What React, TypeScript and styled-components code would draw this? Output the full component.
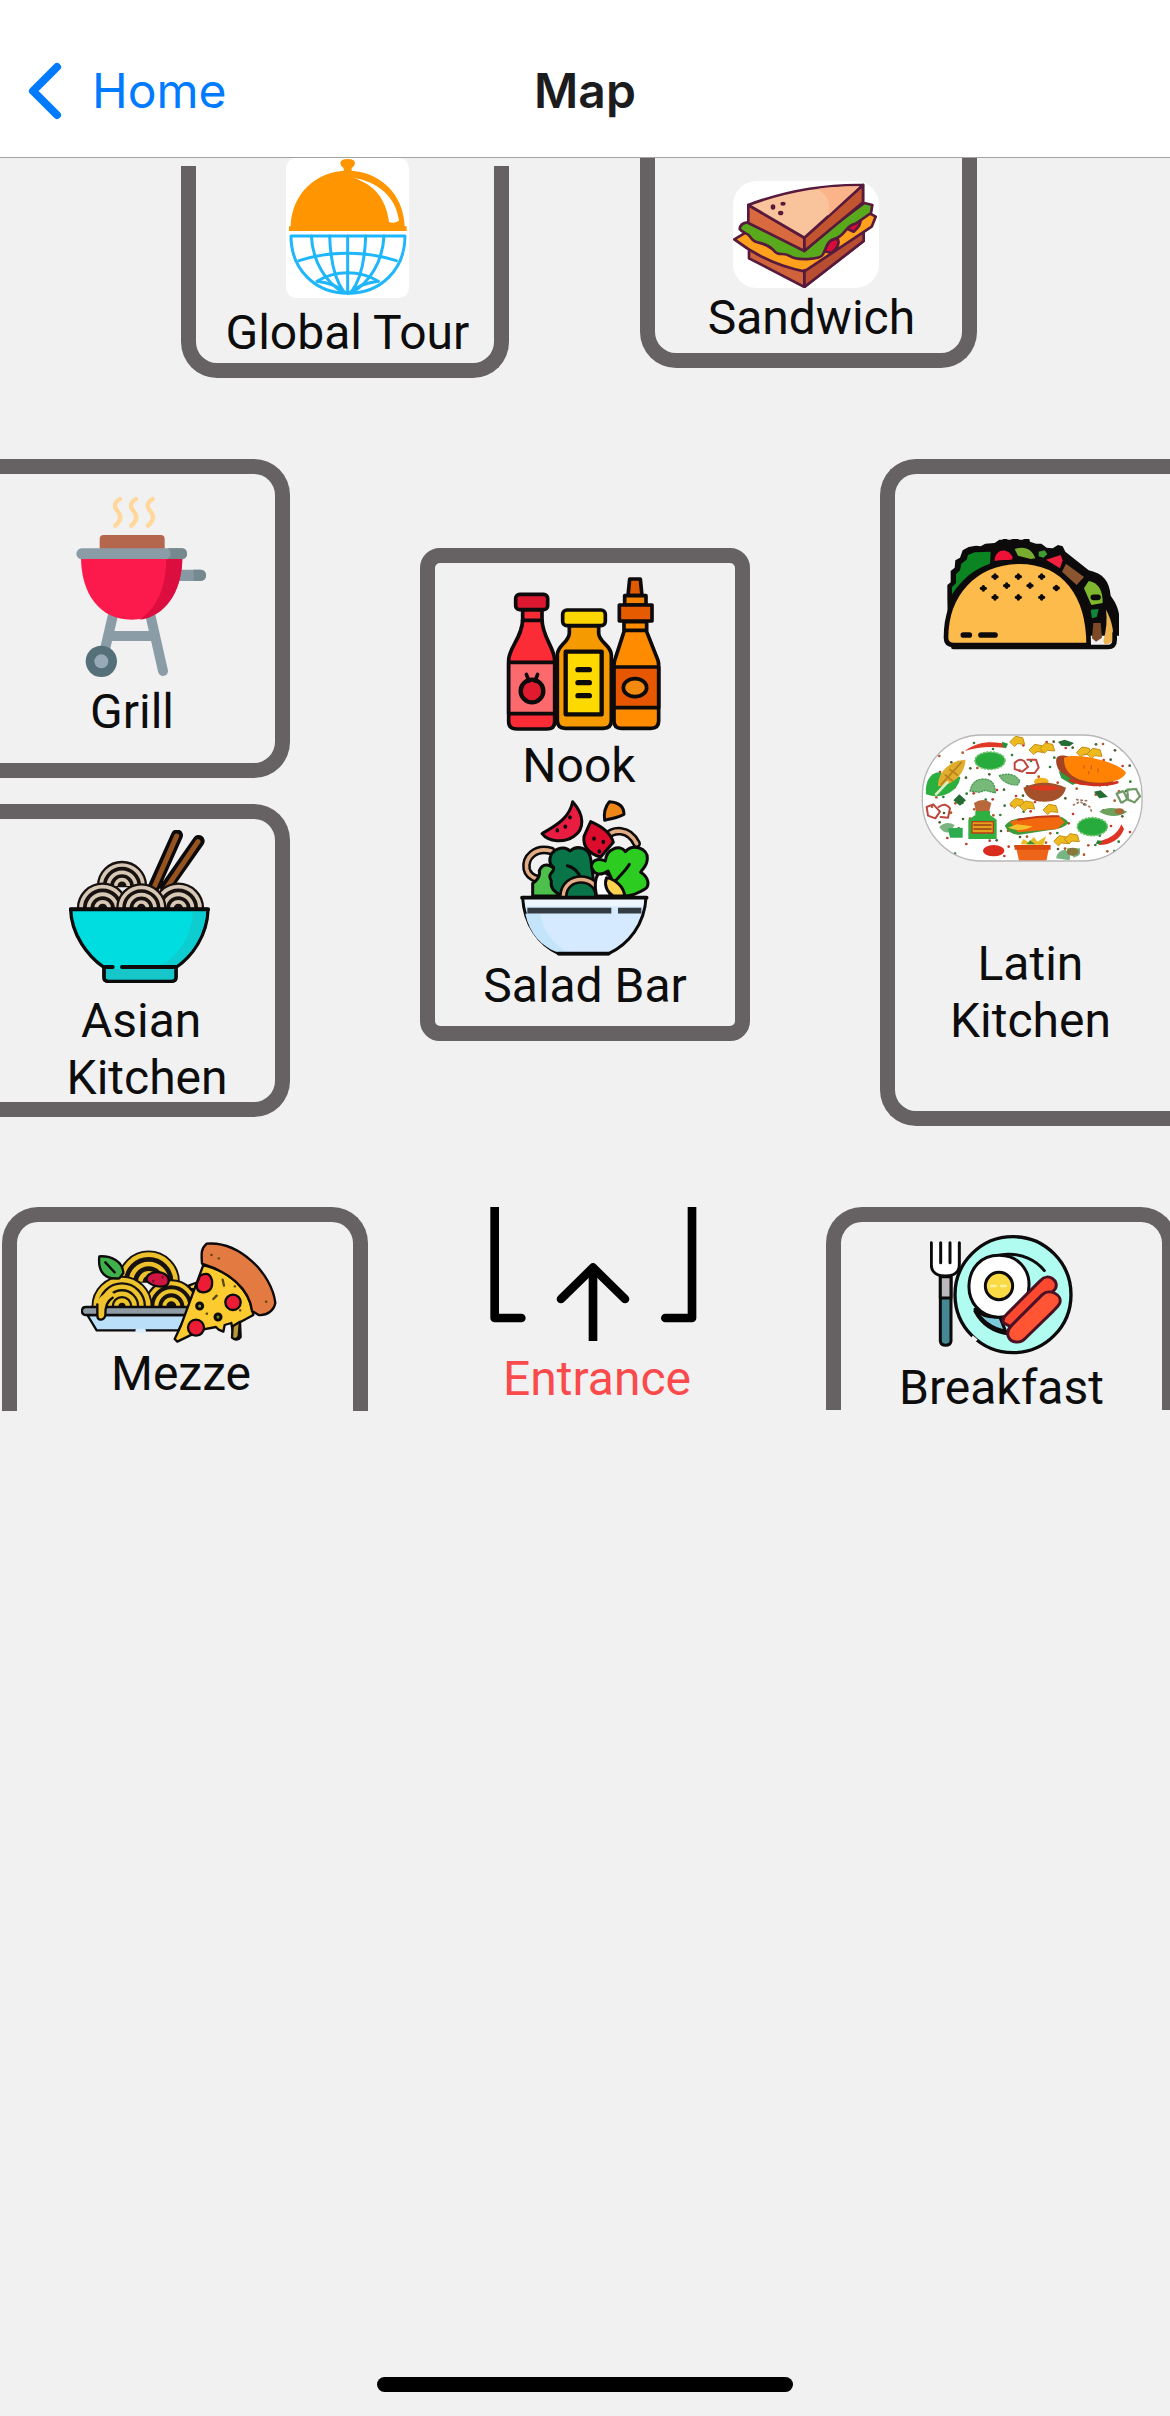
import React from "react";
import styled, { createGlobalStyle } from "styled-components";

const wall = "#666263";
const ink = "#0c0a0b";

const GlobalStyle = createGlobalStyle`
  * { box-sizing: border-box; }
  body { margin: 0; background: #f1f1f1; }
`;

const Screen = styled.div`
  display: flex;
  flex-direction: column;
  min-height: 100vh;
  overflow: hidden;
  background: #f1f1f1;
  font-family: Roboto, "Liberation Sans", sans-serif;
`;

const Header = styled.header`
  display: grid;
  grid-template-columns: 1fr auto 1fr;
  align-items: center;
  padding: 49px 28px 24px;
  background: #ffffff;
  border-bottom: 1px solid #a3a3a5;
  font-family: Inter, Roboto, sans-serif;
`;

const BackButton = styled.button`
  display: flex;
  align-items: center;
  justify-self: start;
  gap: 30px;
  padding: 0;
  border: 0;
  background: none;
  color: #007aff;
  font: inherit;
  font-size: 48px;
  line-height: 84px;
  cursor: pointer;
`;

const Title = styled.h1`
  margin: 0;
  color: #1c1c1e;
  font-size: 48px;
  font-weight: 600;
  line-height: 84px;
`;

const FloorPlan = styled.main`
  display: flex;
  flex-direction: column;
  gap: 81px;
`;

const TopRow = styled.section`
  display: grid;
  grid-template-columns: 328fr 337fr;
  column-gap: 16.4%;
  align-items: start;
  padding: 0 16.5% 0 15.5%;
`;

const MiddleRow = styled.section`
  display: grid;
  grid-template-columns: 290fr 330fr 290fr;
  column-gap: 11.1%;
  align-items: start;
`;

const Column = styled.div<{ $top?: number }>`
  display: flex;
  flex-direction: column;
  gap: 26px;
  padding-top: ${(p) => p.$top ?? 0}px;
`;

const BottomRow = styled.section`
  display: grid;
  grid-template-columns: 366fr 458fr 351fr;
  align-items: start;
  margin: 0 -7px 0 2px;
`;

type Side = "top" | "right" | "bottom" | "left";

const Room = styled.div<{ $open?: Side; $pad: string; $gap?: number; $radius?: number }>`
  display: flex;
  flex-direction: column;
  align-items: center;
  gap: ${(p) => p.$gap ?? 0}px;
  padding: ${(p) => p.$pad};
  border: 15px solid ${wall};
  border-radius: ${(p) => p.$radius ?? 36}px;
  ${(p) => p.$open && `border-${p.$open}: 0;`}
  ${(p) => p.$open === "top" && "border-top-left-radius: 0; border-top-right-radius: 0;"}
  ${(p) => p.$open === "bottom" && "border-bottom-left-radius: 0; border-bottom-right-radius: 0;"}
  ${(p) => p.$open === "left" && "border-top-left-radius: 0; border-bottom-left-radius: 0;"}
  ${(p) => p.$open === "right" && "border-top-right-radius: 0; border-bottom-right-radius: 0;"}
`;

const RaisedRoom = styled(Room)`
  margin-top: 8px;

  svg { margin-top: -8px; }
`;

const Station = styled.figure<{ $gap: number }>`
  display: flex;
  flex-direction: column;
  align-items: center;
  gap: ${(p) => p.$gap}px;
  margin: 0;
`;

const Label = styled.figcaption<{ $accent?: boolean }>`
  margin-bottom: -6px;
  color: ${(p) => (p.$accent ? "#fb4a4c" : "#0d0d0d")};
  font-size: 48px;
  line-height: 57px;
  text-align: center;
  white-space: pre;
`;

const Drawing = styled.svg`
  display: block;
  flex: none;
`;

const Footer = styled.footer`
  display: flex;
  justify-content: center;
  margin-top: auto;
  padding-bottom: 24px;
`;

const HomeIndicator = styled.div`
  width: 35.6%;
  height: 15px;
  border-radius: 8px;
  background: #000000;
`;

/* Every drawing uses three units per pixel. */
function Art({ box, children }: { box: [number, number, number, number]; children: React.ReactNode }) {
  const [x, y, w, h] = box;
  return (
    <Drawing
      width={w / 3}
      height={h / 3}
      viewBox={`${x} ${y} ${w} ${h}`}
      fill="none"
      strokeLinecap="round"
      strokeLinejoin="round"
      aria-hidden="true"
    >
      {children}
    </Drawing>
  );
}

const GlobeArt = () => (
  <Art box={[345, 24, 369, 420]}>
    <rect x="345" y="24" width="369" height="420" rx="30" fill="#fff" />
    <path d="M508 40q0-13 22-13t22 13q0 8-10 14v12h-24V54q-10-6-10-14Z" fill="#ff9500" />
    <path d="M354 243v-14h5C362 130 436 62 530 62s168 68 171 167h6v14Z" fill="#ff9500" />
    <path d="M548 84c72 10 128 58 136 128q-14 10-30 4c-8-66-42-112-106-132Z" fill="#fff" />
    <g stroke="#1fb6fb" strokeWidth="9">
      <path d="M360 258h342c0 100-72 172-171 172S360 358 360 258Z" />
      <path d="M530 258v172M476 258c2 70 14 130 44 170M584 258c-2 70-14 130-44 170M421 258c4 78 44 140 96 170M639 258c-4 78-44 140-96 170" />
      <path d="M384 332c90-30 200-30 292 0M438 394c56-34 128-34 184 0M438 394c34 4 62 14 86 34M622 394c-34 4-62 14-86 34" />
    </g>
  </Art>
);

const SandwichArt = () => (
  <Art box={[308, 92, 471, 321]}>
    <rect x="308" y="92" width="438" height="321" rx="72" fill="#fff" />
    <g stroke="#571a3c" strokeWidth="8">
      <path d="M356 262v62l166 86 178-138v-60L520 340Z" fill="#d0633c" />
      <path d="M522 352l178-142v62L522 410Z" fill="#b84e31" />
      <path d="M312 267l40-24 170 66 196-120 18 10-12 30-202 134q-110-20-210-96Z" fill="#ffa11c" />
      <path d="M578 302q4-32 44-38 10 20-18 44ZM652 236q6-24 38-30 4 18-20 38Z" fill="#d90b3a" />
      <path d="M328 236q2-18 24-20l170 76 180-134 24 6-4 24-46 32c-34 6-30 40-66 46-18 4-22 26-32 46-8 18-84 18-98 6-22-16-34 4-52-20-28-28-56-14-68-38-10-14-24-12-32-24Z" fill="#58a91c" />
      <path d="M354 164v54l168 84 176-150v-48L520 262Z" fill="#d96a3f" />
      <path d="M522 262l176-158v52L522 302Z" fill="#c2552f" />
      <path d="M354 164c100-38 206-62 344-60L522 262Z" fill="#f9c39c" />
    </g>
    <path d="M560 116q44-8 126-8l-94 88c8-28 8-60-32-80Z" fill="#fbb48a" />
    <path d="M522 268v30M522 358v46" stroke="#571a3c" strokeWidth="6" />
    <g fill="#571a3c">
      <ellipse cx="428" cy="170" rx="7" ry="8" />
      <ellipse cx="458" cy="160" rx="8" ry="6" />
      <ellipse cx="451" cy="188" rx="8" ry="7" />
    </g>
  </Art>
);

const GrillArt = () => (
  <Art box={[172, 165, 448, 543]}>
    <g stroke="#ffd79b" strokeWidth="13">
      <path d="M361 174c-20 12-18 24-6 38 10 12 10 26-8 42" />
      <path d="M409 174c-20 12-18 24-6 38 10 12 10 26-8 42" />
      <path d="M459 174c-20 12-18 24-6 38 10 12 10 26-8 42" />
    </g>
    <path d="M300 328v-34q0-12 12-12h171q12 0 12 12v34Z" fill="#b4674c" />
    <g stroke="#8a9ca6" strokeWidth="30">
      <path d="M340 522l-22 94M452 522l38 168M330 585h132" />
      <path d="M540 403h62" stroke="#8799a2" strokeWidth="34" />
    </g>
    <path d="M582 386h20q17 0 17 17t-17 17h-20Z" fill="#75898f" />
    <path d="M244 348h304c0 108-54 188-152 188S244 456 244 348Z" fill="#fb1a4b" />
    <path d="M500 348h48c0 104-52 180-128 188 60-40 80-110 80-188Z" fill="#db0e3f" />
    <rect x="230" y="322" width="332" height="32" rx="16" fill="#8a9ca6" />
    <path d="M505 322h41q16 0 16 16t-16 16h-41q16-16 0-32Z" fill="#75898f" />
    <circle cx="305" cy="661" r="47" fill="#56707a" />
    <circle cx="305" cy="661" r="21" fill="#98aab7" />
  </Art>
);

const Swirl = ({ x, y, r, color, rings = 3 }: { x: number; y: number; r: number; color: string; rings?: number }) => (
  <g>
    <path d={`M${x - r} ${y}a${r} ${r} 0 0 1 ${2 * r} 0Z`} fill="#17120f" stroke="#17120f" strokeWidth="7" />
    {Array.from({ length: rings }, (_, i) => {
      const s = r - 9 - (i * (r - 6)) / rings;
      return s > 0 ? (
        <path key={i} d={`M${x - s} ${y}a${s} ${s} 0 0 1 ${2 * s} 0`} stroke={color} strokeWidth={r / 6.5} strokeLinecap="butt" />
      ) : null;
    })}
  </g>
);

const NoodlesArt = () => (
  <Art box={[207, 117, 468, 459]}>
    <g stroke={ink} strokeWidth="36">
      <path d="M531 133l-68 152M596 150l-98 140" />
    </g>
    <path d="M530 135l-66 150M594 152l-94 138" stroke="#95531f" strokeWidth="15" />
    <Swirl x={366} y={285} r={72} color="#d7c7b5" />
    <Swirl x={535} y={352} r={74} color="#d7c7b5" />
    <Swirl x={308} y={352} r={74} color="#d7c7b5" />
    <Swirl x={424} y={352} r={72} color="#d7c7b5" />
    <g stroke={ink} strokeWidth="10">
      <path d="M212 355h412c-2 76-46 140-96 174v30q0 12-14 12H324q-12 0-12-12v-30c-50-34-98-100-100-174Z" fill="#00dde0" />
      <path d="M578 362h40c-4 70-44 130-92 162h-46c62-34 94-90 98-162Z" fill="#0ecdd0" stroke="none" />
      <path d="M318 534h206v32H324q-6-4-6-12Z" fill="#16c6c9" stroke="none" />
      <path d="M212 355h412M316 528h22M366 528h160" strokeWidth="12" />
      <path d="M312 529v30q0 12 12 12h190q14 0 14-12v-30" />
    </g>
  </Art>
);

const BottlesArt = () => (
  <Art box={[288, 105, 474, 465]}>
    <g stroke={ink} strokeWidth="11">
      <path d="M338 206h58v28c0 54 38 86 38 124v184q0 22-24 22h-88q-26 0-26-22V358c0-38 42-70 42-124Z" fill="#fb2c36" />
      <rect x="296" y="364" width="138" height="154" fill="#fd6a6d" />
      <rect x="317" y="160" width="96" height="46" rx="12" fill="#dc1730" />
      <path d="M338 238h58" />
      <circle cx="366" cy="450" r="34" fill="#e01b30" strokeWidth="13" />
      <path d="M349 400l8 20M383 400l-8 20" />
      <path d="M478 254h88v22c0 28 38 36 38 66v196q0 24-24 24H466q-24 0-24-24V342c0-30 36-38 36-66Z" fill="#f59a00" />
      <rect x="458" y="207" width="128" height="47" rx="13" fill="#fdd600" />
      <rect x="467" y="332" width="108" height="188" fill="#fdd900" strokeWidth="13" />
      <path d="M504 386h34M504 425h34M504 464h34" strokeWidth="16" />
      <path d="M642 242h68v30l34 86q2 6 2 18v164q0 22-24 22h-88q-22 0-22-22V376q0-12 2-18l28-86Z" fill="#fe8b00" />
      <path d="M612 378h134v122H612Z" fill="#e65700" />
      <path d="M654 164l5-50h32l5 50Z" fill="#e05a00" />
      <path d="M644 192v-28h64v28Z" fill="#f28200" />
      <path d="M628 192h98v48h-98Z" fill="#e65b00" />
      <path d="M644 268h64" />
      <ellipse cx="675" cy="440" rx="35" ry="27" fill="#f28a10" />
    </g>
  </Art>
);

const SaladArt = () => (
  <Art box={[312, 54, 424, 470]}>
    <g strokeWidth="26" stroke={ink}>
      <path d="M424 210c-48-14-80 20-74 54 4 20 18 26 32 30" />
      <path d="M590 166c18-20 66-28 90 22" />
      <path d="M424 210c-48-14-80 20-74 54 4 20 18 26 32 30M590 166c18-20 66-28 90 22" stroke="#e2ad84" strokeWidth="11" />
    </g>
    <g stroke={ink} strokeWidth="9">
      <path d="M368 345v-38c12-6 24-24 20-38 10-26 34-20 50 0l6 76Z" fill="#4cc04a" />
      <path d="M424 220c12-20 42-26 56-10 22-20 58-8 62 22l14 110H450c-16-10-30-20-26-42-16-24 14-26 6-42-14-8-12-26-6-38Z" fill="#087448" />
      <path d="M472 254c22 4 34 20 44 42M484 346v-20" />
      <path d="M460 345c2-66 104-66 106 0" fill="#087448" strokeWidth="26" />
      <path d="M460 345c2-66 104-66 106 0" stroke="#e2ad84" strokeWidth="10" />
      <path d="M560 345c-10-44 0-66 14-78l26 18v60Z" fill="#fff" />
      <path d="M544 256c4-26 28-22 42-16 2-36 44-52 60-28 22-26 68-10 66 20 0 26-14 28-20 42 24 14 30 42 10 52-16 8-24 16-48 18h-26l-34-74c-26 18-44 8-50-14Z" fill="#2dcc20" />
      <path d="M658 250c-12 22-32 36-48 58" />
      <path d="M590 290c32 8 52 30 54 55h-34c-22-14-28-36-20-55Z" fill="#fcd350" />
      <path d="M396 158c36-22 82-44 92-96 36 40 36 82 4 104-28 20-76 18-96-8Z" fill="#e91d42" />
      <path d="M542 122c38 16 60 34 68 62l-38 44c-34-10-54-28-50-62Z" fill="#dc0c2d" />
      <path d="M584 118c-4-28 4-44 14-56 30 2 44 16 44 38-18 12-38 12-58 18Z" fill="#ee8718" />
      <path d="M442 147v2M466 136v2M480 108v2M552 172v2M568 210v2M580 182v2" strokeWidth="11" />
      <path d="M338 350h370c-4 80-52 140-112 168H446c-60-28-104-88-108-168Z" fill="#d5eaff" />
      <path d="M344 352h358q0 14-3 24H347q-3-10-3-24Z" fill="#edf6ff" stroke="none" />
      <path d="M346 398c12 60 50 98 92 114h30c-40-28-70-64-78-114Z" fill="#c3e4fb" stroke="none" />
      <path d="M352 389h252M624 389h70" stroke="#333c43" strokeWidth="17" strokeLinecap="butt" />
      <path d="M336 350h374M446 518h150" strokeWidth="11" />
    </g>
  </Art>
);

const tacoSeeds: [number, number][] = [
  [381, 377], [451, 377], [521, 377], [346, 412], [416, 404], [486, 404], [565, 411], [381, 439], [451, 439], [521, 439],
];

const TacoArt = () => (
  <Art box={[222, 264, 531, 366]}>
    <path d="M238 440v-38l10-8v-34l12-10 2-22 14-8 8-22 18-10 22-4 14 2 14-8 28-2 14-10h10v-8h14v8h12l4-10h18v10h14v-10h16l4 16 18 6h16l16 12 18 2 16-10 14 4 8 16 70 56c44 10 62 32 66 76 26 36 28 56 28 112v8H240Z" fill={ink} />
    <path d="M252 430v-22l12-12v-26l12-12 4-20 16-12 4-14 20-8 48-2-2 36c-48 16-84 46-114 92Z" fill="#0b8422" />
    <path d="M380 326c4-34 40-36 54-8l-2 10c-20-2-36-2-52 2Z" fill="#ee1138" />
    <path d="M440 294c30-10 52 0 62 28l-14 2-38-10Z" fill="#78ad2f" />
    <path d="M512 302l18-4 8 12-12 10-14-4Z" fill="#3f9c30" />
    <path d="M534 326l44-14 6 16-8 24Z" fill="#f2203f" />
    <path d="M594 338l54 40-22 24-44-40Z" fill="#8b5530" />
    <path d="M662 390c32 6 42 30 42 66l-34 6-22-50Z" fill="#7fb82f" />
    <path d="M668 476l24-2-6 24-14 4Z" fill="#0f8738" />
    <path d="M676 516h22l4 44-18 12-12-10Z" fill="#7d4a27" />
    <path d="M714 476c14 24 24 60 22 86-2 14-14 18-26 18l-4-10q14-50 8-94Z" fill="#efb452" />
    <path d="M234 560c0-128 84-226 220-228 136 0 208 102 208 250H258q-24 0-24-22Z" fill="#fdbb4c" stroke={ink} strokeWidth="14" />
    <path d="M256 588h464q20 0 20-22v-20" stroke={ink} strokeWidth="14" />
    <path d="M286 552h18M339 552h42M676 439h14" stroke={ink} strokeWidth="17" />
    {tacoSeeds.map(([x, y]) => (
      <path key={`${x}-${y}`} d={`M${x - 6} ${y}h12M${x} ${y - 5}v10`} stroke={ink} strokeWidth="10" />
    ))}
  </Art>
);

const crumbs: [number, number, string][] = Array.from({ length: 150 }, (_, i) => [
  185 + ((i * 137) % 605),
  868 + ((i * 83) % 350),
  ["#2e7d3a", "#b4552a", "#4b5b33", "#c0392b"][i % 4],
]);

const chips: [number, number][] = [[440, 868], [498, 892], [530, 888], [640, 900], [672, 904], [440, 1054], [470, 1062], [540, 1072], [572, 1166], [604, 1160]];

const FiestaArt = () => (
  <Art box={[144, 849, 675, 384]}>
    <defs>
      <clipPath id="platter">
        <rect x="157" y="852" width="659" height="378" rx="180" />
      </clipPath>
    </defs>
    <rect x="157" y="852" width="659" height="378" rx="180" fill="#fff" />
    <g clipPath="url(#platter)">
      {crumbs.map(([x, y, c]) => (
        <circle key={`${x}-${y}`} cx={x} cy={y} r="4" fill={c} />
      ))}
      <path d="M284 900c34-26 72-30 108-24l20 4-8 10c-40-4-80-4-120 10Z" fill="#e03a26" />
      <path d="M396 872l18 6-6 14-10-4Z" fill="#2a8f3c" />
      <ellipse cx="360" cy="929" rx="45" ry="26" fill="#27ab3c" stroke="#6cc06a" strokeWidth="5" strokeDasharray="3 7" />
      <ellipse cx="667" cy="1127" rx="45" ry="27" fill="#27ab3c" stroke="#6cc06a" strokeWidth="5" strokeDasharray="3 7" />
      <path d="M168 1030c-4-40 14-62 36-66l66 14c0 34-46 72-102 52Z" fill="#2bb03f" />
      <path d="M204 1006c-2-42 36-78 82-80 0 38-32 76-82 80Z" fill="#e0ad2c" />
      <path d="M214 1000l60-66M226 972l22 18M240 956l22 16" stroke="#b8821c" strokeWidth="5" />
      <path d="M232 994l-34 36" stroke="#ddeec6" strokeWidth="8" />
      {chips.map(([x, y]) => (
        <path key={`${x}-${y}`} d={`M${x - 20} ${y + 4}l16-16 22 4 6 20-22-2-8 8Z`} fill="#ecb91e" stroke="#c48d18" strokeWidth="3" />
      ))}
      <path d="M564 872l20-6 28 10-14 10-24-2ZM672 1022l20-4 22 20-26 4ZM250 1048l18-18 20 18-18 16Z" fill="#256d34" />
      <path d="M434 936q14-16 28-6l12 18-18 14-22-8ZM472 926h26l8 24-12 16h-24M170 1068l20-8 20 22-14 20-22-8ZM206 1068q20-16 34 4l-6 28-22-2" stroke="#bd473f" strokeWidth="6" />
      <path d="M740 1028l20-8 12 24-18 12ZM772 1016l26-2 12 22-16 18-20-8Z" stroke="#6f9a66" strokeWidth="7" strokeDasharray="7 5" />
      <path d="M560 920c10-10 24-6 34-4l150 50-20 36-98-2-46-28c-14-10-26-34-20-52Z" fill="#a34324" />
      <path d="M566 960l20 12 34 24-12 6-34-20Z" fill="#2f9a3c" />
      <path d="M582 920c40-18 172 16 186 46-12 26-62 34-114 26-46-8-74-30-72-72Z" fill="#ff8205" />
      <path d="M600 988c40 16 104 18 142 6" stroke="#d12f1e" strokeWidth="8" />
      <path d="M642 944v8M664 944v10M684 954v8M656 962v6" stroke="#d0640c" strokeWidth="4" />
      <path d="M300 1020q8-36 40-36 36 0 36 42l-30-8-18 6ZM388 974q40-14 62 16l-8 12q-38 0-54-28Z" fill="#78b97a" stroke="#4c9a58" strokeWidth="4" strokeDasharray="4 5" />
      <ellipse cx="514" cy="992" rx="22" ry="12" fill="#f2b31d" />
      <path d="M460 1010q64-30 128 0-10 42-66 42-52 0-62-42Z" fill="#a4502a" />
      <path d="M474 1010q50-16 100 2-50 16-100-2Z" fill="#e2381f" />
      <path d="M312 1056q26-18 52 0l-6 24h-40Z" fill="#b8683a" />
      <path d="M316 1080h44v12l20 14v58H295v-58l21-14Z" fill="#2fb040" />
      <path d="M306 1112h64v34h-64Z" fill="#e2a21b" stroke="#bb3b1a" strokeWidth="4" />
      <path d="M312 1122h52M312 1134h52" stroke="#9c3919" strokeWidth="5" strokeDasharray="6 3" />
      <path d="M404 1124q18-20 46-22l92-8q38-2 54 22-20 20-60 22l-78 12q-38 6-54-26Z" fill="#3c9a39" />
      <path d="M420 1112q80-20 150-14l14 16-22 20-118 10Z" fill="#f2680e" />
      <path d="M414 1130q40 16 74-4l-48-6Z" fill="#f5c22c" />
      <path d="M444 1106q70-12 122-10" stroke="#c2361c" strokeWidth="6" />
      <path d="M438 1188h100l-10 46h-80Z" fill="#ee6418" />
      <path d="M434 1182h108v14H434Z" fill="#d9480e" />
      <path d="M452 1180l8-16 16 10 16-16 10 14 26-16-8 26Z" fill="#e8bd22" />
      <path d="M470 1180l10-12 16 12Z" fill="#3b9439" />
      <ellipse cx="371" cy="1199" rx="32" ry="17" fill="#d92b1e" />
      <path d="M678 1174c38-10 64-22 76-54l8 14c-10 30-40 48-74 48Z" fill="#dd3423" />
      <path d="M682 1168l16 2-8 10-12-2Z" fill="#25863a" />
      <path d="M688 1082q30-22 84 0-40 26-84 0Z" fill="#6ca25c" />
      <ellipse cx="748" cy="1081" rx="14" ry="9" fill="#a86734" />
      <path d="M610 1062l20-10 30 16 4 12M620 1046l36 4" stroke="#a07465" strokeWidth="5" strokeDasharray="4 9" />
      <path d="M208 1128q20-20 46-6l-14 22q-20 4-32-16Z" fill="#7bb382" />
      <path d="M234 1132l44-2v30h-38Z" fill="#2cab50" />
      <path d="M558 1222q4-24 28-26 20 14 12 32ZM588 1192h42v18l-18 10Z" fill="#78b585" />
      <ellipse cx="608" cy="1202" rx="18" ry="12" fill="#87783c" />
    </g>
    <rect x="157" y="852" width="659" height="378" rx="180" stroke="#b9b7b8" strokeWidth="4" />
  </Art>
);

const MezzeArt = () => (
  <Art box={[243, 156, 600, 309]}>
    <Swirl x={446} y={278} r={90} color="#ecc12b" rings={3} />
    <Swirl x={514} y={352} r={78} color="#eec42d" rings={3} />
    <Swirl x={366} y={352} r={88} color="#eec42d" rings={4} />
    <g stroke={ink} strokeWidth="7">
      <path d="M566 290l20-8 18 6-6 16-26-4Z" fill="#ead061" />
      <path d="M298 202c36-2 70 14 72 50l-12 16c-38 4-66-14-60-66Z" fill="#40b04a" />
      <path d="M316 220l28 30" />
      <path d="M440 276c-6-34 64-36 66-2 2 26-42 24-66 2Z" fill="#cf1541" />
      <path d="M460 276v1M488 264v1" stroke="#7c0a2a" />
      <path d="M262 378h296l-22 46H290Z" fill="#b9dff9" />
      <path d="M258 354h310l-12 24H258q-12 0-12-12t12-12Z" fill="#8f9ca5" />
      <path d="M412 425h20" stroke="#d8edfb" strokeWidth="12" />
      <path d="M292 352q-4-30 40-46l18 14q-36 10-34 62 0 14-14 10-10-2-10-12Z" fill="#efc22e" stroke="none" />
      <path d="M292 346v32q0 14 10 14t14-12q-2-40 22-54" />
      <path d="M610 228c80 20 140 74 150 150l-40 22 2 44q-8 12-20 6l-8-48-20 6-4 20-14-6-8-8-42 8-74 36-8-8 18-38Z" fill="#fbcb2f" />
      <path d="M720 398l-4 44q-8 14-20 4l2-34Z" fill="#b9963a" />
      <path d="M620 164c98-8 196 90 206 178-4 22-24 38-50 36l-20-12c-8-70-72-118-150-142-2-30-4-44 14-60Z" fill="#e27a42" />
      <g fill="#ec1c37">
        <path d="M600 260q28-16 36 14 4 36-28 36-20-2-18-24Z" />
        <circle cx="699" cy="340" r="23" />
        <circle cx="588" cy="416" r="24" />
      </g>
      <circle cx="599" cy="351" r="9" fill="#93a02b" strokeWidth="9" />
      <circle cx="654" cy="384" r="9" fill="#76901f" strokeWidth="9" />
      <path d="M668 272l4 18M704 292h1M640 330l10-10M634 198h1M656 208h1M798 338h1M720 364h1M620 374h1" stroke="#5c4714" />
    </g>
  </Art>
);

const BreakfastArt = () => (
  <Art box={[389, 134, 428, 363]}>
    <g stroke={ink} strokeWidth="9">
      <path d="M420 258h32v198q-2 12-16 12t-16-12Z" fill="#458792" />
      <path d="M420 262h32v64h-32Z" fill="#bbb9bd" />
      <path d="M393 160v66c0 24 18 34 42 34s42-10 42-34v-66M421 160v60M449 160v60" fill="#fff" />
      <circle cx="638" cy="316" r="174" fill="#b1fcf0" strokeWidth="10" />
      <path d="M520 252c40-74 160-76 212-8M524 366c20 38 54 62 102 68" />
      <path d="M524 360c24 22 46 26 74 22l18 44c-40-8-72-30-92-66Z" fill="#7cc9dc" />
      <path d="M596 198c56 0 92 40 90 92-2 54-40 96-94 94-54-4-88-46-86-96 2-52 36-90 90-90Z" fill="#fff" />
      <circle cx="596" cy="290" r="41" fill="#f9da45" />
      <path d="M608 400q-2-14 10-24l102-102c22-26 60 0 44 26l-114 122Z" fill="#fb4930" stroke="#4a1024" />
      <path d="M624 442c-6-14 0-24 10-34l92-92c20-20 62 0 52 26-6 12-12 14-20 24l-82 80c-16 18-44 16-52-4Z" fill="#ff5534" stroke="#4a1024" />
    </g>
    <path d="M572 290h14M602 290h14" stroke="#fdf3a2" strokeWidth="7" />
    <path d="M514 443l14 12" stroke="#f1f1f1" strokeWidth="12" strokeLinecap="butt" />
  </Art>
);

const EntranceArt = () => (
  <Art box={[90, 54, 648, 402]}>
    <g stroke="#000" strokeWidth="26">
      <path d="M107 40v347h80M699 40v347h-80M306 330l96-94 96 94" />
      <path d="M402 240v230" />
    </g>
  </Art>
);

export default function App() {
  return (
    <Screen>
      <GlobalStyle />
      <Header>
        <BackButton type="button">
          <Drawing width="34" height="58" viewBox="0 0 34 58" fill="none" aria-hidden="true">
            <path d="M29 5 5 29l24 24" stroke="currentColor" strokeWidth="8" strokeLinecap="round" strokeLinejoin="round" />
          </Drawing>
          Home
        </BackButton>
        <Title>Map</Title>
      </Header>

      <FloorPlan>
        <TopRow>
          <RaisedRoom $open="top" $pad="0 0 8px 4px">
            <Station $gap={6}>
              <GlobeArt />
              <Label>Global Tour</Label>
            </Station>
          </RaisedRoom>
          <Room $open="top" $pad="23px 0 13px 6px">
            <Station $gap={1}>
              <SandwichArt />
              <Label>Sandwich</Label>
            </Station>
          </Room>
        </TopRow>

        <MiddleRow>
          <Column>
            <Room $open="left" $pad="22px 11px 29px 0">
              <Station $gap={6}>
                <GrillArt />
                <Label>Grill</Label>
              </Station>
            </Room>
            <Room $open="left" $pad="11px 0 2px 19px">
              <Station $gap={9}>
                <NoodlesArt />
                <Label>{"Asian \nKitchen"}</Label>
              </Station>
            </Room>
          </Column>
          <Column $top={89}>
            <Room $pad="13px 0 18px" $gap={11} $radius={20}>
              <Station $gap={6}>
                <BottlesArt />
                <Label>{"Nook "}</Label>
              </Station>
              <Station $gap={1}>
                <SaladArt />
                <Label>Salad Bar</Label>
              </Station>
            </Room>
          </Column>
          <Room $open="right" $pad="65px 4px 68px 0" $gap={73}>
            <TacoArt />
            <Station $gap={73}>
              <FiestaArt />
              <Label>{"Latin\nKitchen"}</Label>
            </Station>
          </Room>
        </MiddleRow>

        <BottomRow>
          <Room $open="bottom" $pad="19px 8px 15px 0">
            <Station $gap={1}>
              <MezzeArt />
              <Label>Mezze</Label>
            </Station>
          </Room>
          <Station $gap={9}>
            <EntranceArt />
            <Label $accent>Entrance</Label>
          </Station>
          <Room $open="bottom" $pad="12px 0 0">
            <Station $gap={4}>
              <BreakfastArt />
              <Label>Breakfast</Label>
            </Station>
          </Room>
        </BottomRow>
      </FloorPlan>

      <Footer>
        <HomeIndicator />
      </Footer>
    </Screen>
  );
}
